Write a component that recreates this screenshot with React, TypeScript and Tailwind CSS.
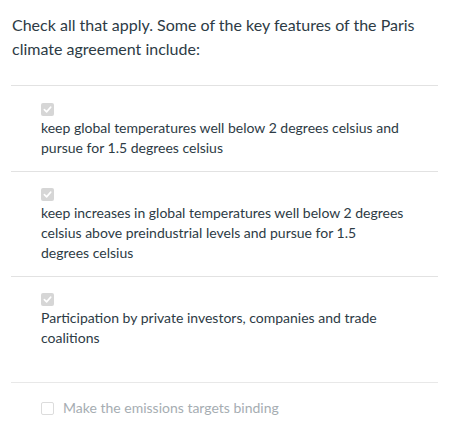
import React from "react";

function Checked() {
  return (
    <span className="block w-[13px] h-[13px] rounded-[2px] bg-[#d6d6d6] flex items-center justify-center">
      <svg width="9" height="9" viewBox="0 0 10 10">
        <path d="M1.5 5.2 L4 7.6 L8.6 2.4" fill="none" stroke="#ffffff" strokeWidth="1.8" strokeLinecap="round" strokeLinejoin="round" />
      </svg>
    </span>
  );
}

export default function App() {
  return (
    <div className="w-[449px] h-[445px] bg-white px-[11px] pt-[13px]" style={{ fontFamily: "Lato, 'Noto Sans', sans-serif" }}>
      <p className="text-[16px] leading-[24px] text-[#2d3b45] pl-px">
        Check all that apply. Some of the key features of the Paris climate agreement include:
      </p>
      <div className="mt-[24px] border-t border-[#e2e2e2]">
        <div className="pl-[30px] pr-[32px] pt-[17px] pb-[13px]">
          <Checked />
          <p className="mt-[2px] text-[14px] leading-[20px] text-[#2d3b45]">
            keep global temperatures well below 2 degrees celsius and pursue for 1.5 degrees celsius
          </p>
        </div>
        <div className="border-t border-[#e2e2e2] pl-[30px] pr-[32px] pt-[16px] pb-[13px]">
          <Checked />
          <p className="mt-[2px] text-[14px] leading-[20px] text-[#2d3b45]">
            keep increases in global temperatures well below 2 degrees celsius above preindustrial levels and pursue for 1.5 degrees celsius
          </p>
        </div>
        <div className="border-t border-[#e2e2e2] pl-[30px] pr-[32px] pt-[16px] pb-[34px]">
          <Checked />
          <p className="mt-[2px] text-[14px] leading-[20px] text-[#2d3b45]">
            Participation by private investors, companies and trade coalitions
          </p>
        </div>
        <div className="border-t border-[#e8e8e8] pl-[30px] pt-[15px] pb-[14px] flex items-center gap-[9px]">
          <span className="block w-[13px] h-[13px] rounded-[2px] border border-[#dcdcdc] bg-white" />
          <span className="text-[14px] leading-[20px] text-[#a6adb2]">Make the emissions targets binding</span>
        </div>
      </div>
    </div>
  );
}
